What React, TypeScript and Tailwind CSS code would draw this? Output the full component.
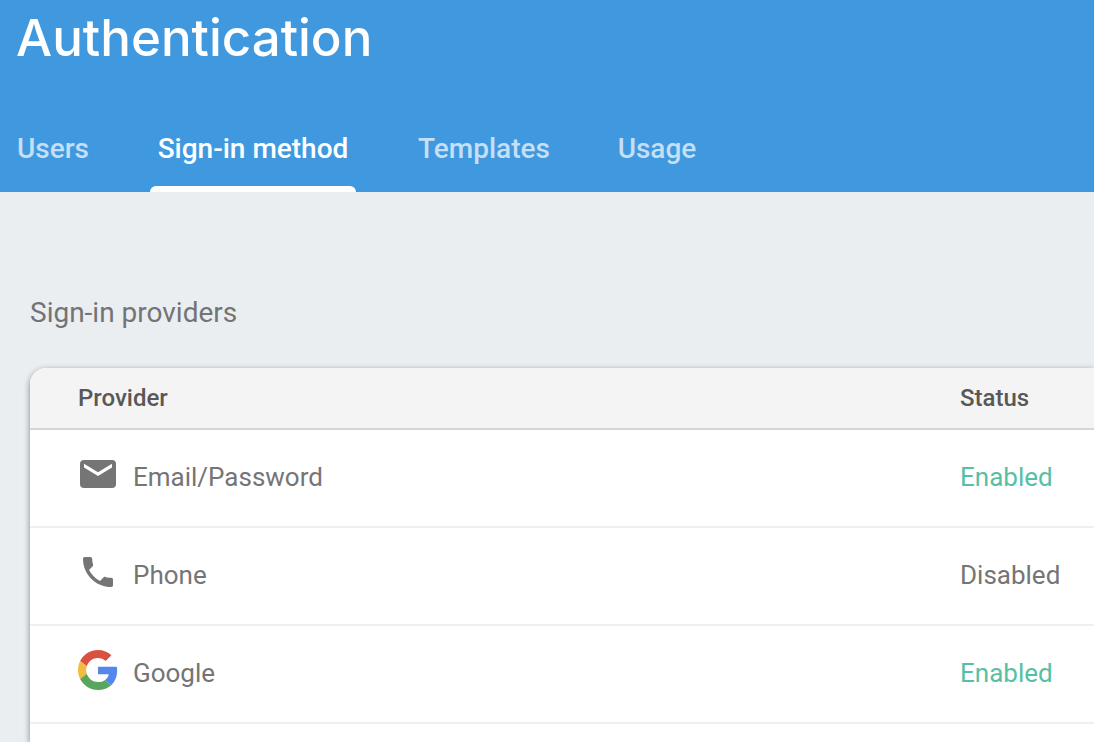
import type { ReactNode } from "react";

const tabs = [
  { label: "Users", width: "min-w-[82px]" },
  { label: "Sign-in method", width: "min-w-[206px]" },
  { label: "Templates", width: "min-w-[144px]" },
  { label: "Usage", width: "min-w-[90px]" },
];

function MailIcon() {
  return (
    <svg viewBox="0 0 40 40" className="size-10" aria-hidden="true">
      <rect x="2" y="6" width="36" height="28" rx="4" fill="#757575" />
      <path d="M6 9.8l14 8.5 14-8.5v3.7L20 22 6 13.5z" fill="#fff" />
    </svg>
  );
}

function PhoneIcon() {
  return (
    <svg viewBox="0 0 24 24" className="size-10" aria-hidden="true">
      <path
        d="M6.62 10.79c1.44 2.83 3.76 5.14 6.59 6.59l2.2-2.2c.27-.27.67-.36 1.02-.24 1.12.37 2.33.57 3.57.57.55 0 1 .45 1 1V20c0 .55-.45 1-1 1-9.39 0-17-7.61-17-17 0-.55.45-1 1-1h3.5c.55 0 1 .45 1 1 0 1.25.2 2.45.57 3.57.11.35.03.74-.25 1.02l-2.2 2.2z"
        fill="#757575"
      />
    </svg>
  );
}

function GoogleIcon() {
  return (
    <svg viewBox="0 0 48 48" className="size-10" aria-hidden="true">
      <path
        fill="#db5140"
        d="M24 9.5c3.54 0 6.71 1.22 9.21 3.6l6.85-6.85C35.9 2.38 30.47 0 24 0 14.62 0 6.51 5.38 2.56 13.22l7.98 6.19C12.43 13.72 17.74 9.5 24 9.5z"
      />
      <path
        fill="#5387ec"
        d="M46.98 24.55c0-1.57-.15-3.09-.38-4.55H24v9.02h12.94c-.58 2.96-2.26 5.48-4.78 7.18l7.73 6c4.51-4.18 7.09-10.36 7.09-17.65z"
      />
      <path
        fill="#f2bb41"
        d="M10.53 28.59c-.48-1.45-.76-2.99-.76-4.59s.27-3.14.76-4.59l-7.98-6.19C.92 16.46 0 20.12 0 24c0 3.88.92 7.54 2.56 10.78l7.97-6.19z"
      />
      <path
        fill="#59a55d"
        d="M24 48c6.48 0 11.93-2.13 15.89-5.81l-7.73-6c-2.15 1.45-4.92 2.3-8.16 2.3-6.26 0-11.57-4.22-13.47-9.91l-7.98 6.19C6.51 42.62 14.62 48 24 48z"
      />
    </svg>
  );
}

const providers: { name: string; icon: ReactNode; enabled: boolean }[] = [
  { name: "Email/Password", icon: <MailIcon />, enabled: true },
  { name: "Phone", icon: <PhoneIcon />, enabled: false },
  { name: "Google", icon: <GoogleIcon />, enabled: true },
];

export default function App() {
  return (
    <div className="flex min-h-screen flex-col bg-[#eaeef1] font-['Roboto',sans-serif]">
      <header className="bg-[#4099df]">
        <h1 className="px-4 pt-2 font-['Inter',sans-serif] text-[51px] leading-[60px] font-medium text-white">
          Authentication
        </h1>
        <nav className="flex gap-14 px-3 pt-9">
          {tabs.map((tab, i) => (
            <a
              key={tab.label}
              href="#"
              aria-current={i === 1 ? "page" : undefined}
              className={`flex flex-col items-center text-[28px] leading-[90px] font-medium ${tab.width} ${
                i === 1 ? "text-white" : "text-[#c5dff5]"
              }`}
            >
              <span className="h-[82px]">{tab.label}</span>
              <span
                className={`h-[6px] w-full rounded-t-[6px] ${i === 1 ? "bg-white" : ""}`}
              />
            </a>
          ))}
        </nav>
      </header>

      <main className="flex flex-1 flex-col pt-[105px] pl-[30px]">
        <h2 className="text-[28px] leading-8 text-[#737476]">Sign-in providers</h2>
        <section className="mt-[39px] flex-1 overflow-hidden rounded-tl-2xl bg-white shadow-[0_2px_6px_rgba(0,0,0,0.45)]">
          <table className="w-full table-fixed border-collapse text-left">
            <thead>
              <tr className="h-[61px] border-b-2 border-[#d6d6d6] bg-[#f4f4f4] text-2xl text-[#585858]">
                <th className="pl-12 font-medium">Provider</th>
                <th className="w-[134px] font-medium">Status</th>
              </tr>
            </thead>
            <tbody>
              {providers.map((p) => (
                <tr
                  key={p.name}
                  className="h-[98px] border-b-2 border-[#efefef] text-[26px] text-[#757575]"
                >
                  <td className="pl-12">
                    <div className="flex items-center gap-[15px]">
                      <span className="pb-2">{p.icon}</span>
                      <span className="pb-0.5">{p.name}</span>
                    </div>
                  </td>
                  <td className={`pb-0.5 ${p.enabled ? "text-[#57bfa4]" : ""}`}>
                    {p.enabled ? "Enabled" : "Disabled"}
                  </td>
                </tr>
              ))}
            </tbody>
          </table>
        </section>
      </main>
    </div>
  );
}
